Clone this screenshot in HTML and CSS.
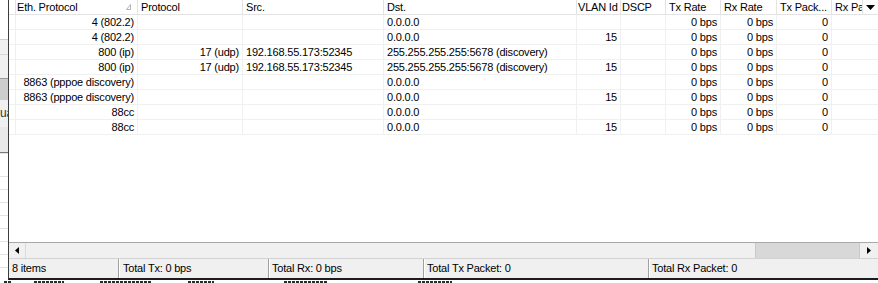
FILE: index.html
```html
<!DOCTYPE html>
<html lang="en">
<head>
    <meta charset="UTF-8">
    <title>Sniffer</title>
    <link rel="stylesheet" href="styles.css">
</head>
<body>
    <div class="screen">
        <div class="backdrop">
            <div class="bd-top"></div>
            <div class="bd-panel"></div>
            <div class="bd-dark"></div>
            <div class="bd-label">ua</div>
            <div class="bd-panel2"></div>
            <div class="bd-list"></div>
        </div>

        <div class="window">
            <div class="grid">
                <div class="row head">
                    <div class="cell"></div>
                    <div class="cell sorted">
                        <span>Eth. Protocol</span>
                        <svg class="sort-mark" width="5" height="6" viewBox="0 0 5 6"><polyline points="0.5,5.5 4.5,0.5 4.5,5.5 0.5,5.5" fill="none" stroke="#b4b4b4" stroke-width="1"/></svg>
                    </div>
                    <div class="cell">Protocol</div>
                    <div class="cell">Src.</div>
                    <div class="cell">Dst.</div>
                    <div class="cell tight">VLAN Id</div>
                    <div class="cell tight">DSCP</div>
                    <div class="cell">Tx Rate</div>
                    <div class="cell">Rx Rate</div>
                    <div class="cell">Tx Pack...</div>
                    <div class="cell">Rx Pa</div>
                    <div class="cell menu">
                        <svg width="9" height="5" viewBox="0 0 9 5"><polygon points="0,0 9,0 4.5,5" fill="#000"/></svg>
                    </div>
                </div>

                <div class="row">
                    <div class="cell"></div>
                    <div class="cell r">4 (802.2)</div>
                    <div class="cell r"></div>
                    <div class="cell"></div>
                    <div class="cell">0.0.0.0</div>
                    <div class="cell r"></div>
                    <div class="cell"></div>
                    <div class="cell r">0 bps</div>
                    <div class="cell r">0 bps</div>
                    <div class="cell r">0</div>
                    <div class="cell last"></div>
                </div>
                <div class="row">
                    <div class="cell"></div>
                    <div class="cell r">4 (802.2)</div>
                    <div class="cell r"></div>
                    <div class="cell"></div>
                    <div class="cell">0.0.0.0</div>
                    <div class="cell r">15</div>
                    <div class="cell"></div>
                    <div class="cell r">0 bps</div>
                    <div class="cell r">0 bps</div>
                    <div class="cell r">0</div>
                    <div class="cell last"></div>
                </div>
                <div class="row">
                    <div class="cell"></div>
                    <div class="cell r">800 (ip)</div>
                    <div class="cell r">17 (udp)</div>
                    <div class="cell">192.168.55.173:52345</div>
                    <div class="cell">255.255.255.255:5678 (discovery)</div>
                    <div class="cell r"></div>
                    <div class="cell"></div>
                    <div class="cell r">0 bps</div>
                    <div class="cell r">0 bps</div>
                    <div class="cell r">0</div>
                    <div class="cell last"></div>
                </div>
                <div class="row">
                    <div class="cell"></div>
                    <div class="cell r">800 (ip)</div>
                    <div class="cell r">17 (udp)</div>
                    <div class="cell">192.168.55.173:52345</div>
                    <div class="cell">255.255.255.255:5678 (discovery)</div>
                    <div class="cell r">15</div>
                    <div class="cell"></div>
                    <div class="cell r">0 bps</div>
                    <div class="cell r">0 bps</div>
                    <div class="cell r">0</div>
                    <div class="cell last"></div>
                </div>
                <div class="row">
                    <div class="cell"></div>
                    <div class="cell r">8863 (pppoe discovery)</div>
                    <div class="cell r"></div>
                    <div class="cell"></div>
                    <div class="cell">0.0.0.0</div>
                    <div class="cell r"></div>
                    <div class="cell"></div>
                    <div class="cell r">0 bps</div>
                    <div class="cell r">0 bps</div>
                    <div class="cell r">0</div>
                    <div class="cell last"></div>
                </div>
                <div class="row">
                    <div class="cell"></div>
                    <div class="cell r">8863 (pppoe discovery)</div>
                    <div class="cell r"></div>
                    <div class="cell"></div>
                    <div class="cell">0.0.0.0</div>
                    <div class="cell r">15</div>
                    <div class="cell"></div>
                    <div class="cell r">0 bps</div>
                    <div class="cell r">0 bps</div>
                    <div class="cell r">0</div>
                    <div class="cell last"></div>
                </div>
                <div class="row">
                    <div class="cell"></div>
                    <div class="cell r">88cc</div>
                    <div class="cell r"></div>
                    <div class="cell"></div>
                    <div class="cell">0.0.0.0</div>
                    <div class="cell r"></div>
                    <div class="cell"></div>
                    <div class="cell r">0 bps</div>
                    <div class="cell r">0 bps</div>
                    <div class="cell r">0</div>
                    <div class="cell last"></div>
                </div>
                <div class="row">
                    <div class="cell"></div>
                    <div class="cell r">88cc</div>
                    <div class="cell r"></div>
                    <div class="cell"></div>
                    <div class="cell">0.0.0.0</div>
                    <div class="cell r">15</div>
                    <div class="cell"></div>
                    <div class="cell r">0 bps</div>
                    <div class="cell r">0 bps</div>
                    <div class="cell r">0</div>
                    <div class="cell last"></div>
                </div>
            </div>

            <div class="hscroll">
                <div class="sb-btn sb-left">
                    <svg width="4" height="7" viewBox="0 0 4 7"><polygon points="4,0 4,7 0,3.5" fill="#000"/></svg>
                </div>
                <div class="sb-track"><div class="sb-thumb"></div></div>
                <div class="sb-btn sb-right">
                    <svg width="4" height="7" viewBox="0 0 4 7"><polygon points="0,0 0,7 4,3.5" fill="#000"/></svg>
                </div>
            </div>

            <div class="status">
                <div class="st st-items">8 items</div>
                <div class="st st-tx">Total Tx: 0 bps</div>
                <div class="st st-rx">Total Rx: 0 bps</div>
                <div class="st st-txp">Total Tx Packet: 0</div>
                <div class="st st-rxp">Total Rx Packet: 0</div>
            </div>
        </div>
    </div>
    <div class="under">
        <span class="frag f1"></span>
        <span class="frag f2"></span>
        <span class="frag f3"></span>
        <span class="frag f4"></span>
        <span class="frag f5"></span>
        <span class="frag f6"></span>
    </div>
</body>
</html>
```

FILE: styles.css
```css
* {
    margin: 0;
    padding: 0;
    box-sizing: border-box;
}

body {
    font-family: "Liberation Sans", Arial, sans-serif;
    font-size: 11px;
    letter-spacing: -0.2px;
    color: #000;
    background: #fff;
    width: 878px;
    height: 283px;
    overflow: hidden;
}

.screen {
    display: flex;
    height: 280px;
}

/* window behind, only a thin strip shows */
.backdrop {
    width: 8px;
    display: flex;
    flex-direction: column;
    overflow: hidden;
}

.bd-top {
    height: 40px;
    background: #fff;
    border-bottom: 1px solid #cfcfcf;
}

.bd-panel {
    height: 38px;
    background: #f0f0f0;
    border-top: 14px solid #f0f0f0;
    background-image: linear-gradient(#d8d8d8, #d8d8d8);
    background-size: 100% 1px;
    background-repeat: no-repeat;
}

.bd-dark {
    height: 22px;
    background: #cdcdcd;
    border-top: 1px solid #9a9a9a;
}

.bd-label {
    height: 27px;
    background: #f0f0f0;
    line-height: 27px;
    text-align: right;
    font-size: 12px;
    color: #333;
    white-space: nowrap;
}

.bd-panel2 {
    height: 26px;
    background: #e9e9e9;
    border-bottom: 1px solid #7a7a7a;
}

.bd-list {
    flex: 1;
    background: repeating-linear-gradient(#fff 0, #fff 12px, #e3e3e3 12px, #e3e3e3 13px);
    background-position: 0 11px;
}

.window {
    flex: 1;
    display: flex;
    flex-direction: column;
    border-left: 1px solid #3c3c3c;
    border-bottom: 2px solid #1c1c1c;
    overflow: hidden;
}

.grid {
    height: 242px;
    background: #fff;
}

.row {
    display: grid;
    grid-template-columns: 5px 124px 105px 141px 193px 44px 45px 55px 56px 55px 31px 15px;
    height: 15px;
}

.cell {
    height: 15px;
    line-height: 15px;
    padding: 0 3px;
    white-space: nowrap;
    overflow: hidden;
    border-right: 1px solid #f0f0f0;
    border-bottom: 1px solid #f0f0f0;
}

.cell.r {
    text-align: right;
}

.cell.last {
    grid-column: span 2;
    border-right: none;
}

.head .cell {
    border-color: #e3e3e3;
    line-height: 14px;
}

.head .cell.tight {
    padding-left: 1px;
}

.sorted {
    display: flex;
    justify-content: space-between;
    align-items: center;
}

.sort-mark {
    margin-right: 3px;
}

.menu {
    display: flex;
    align-items: center;
    justify-content: center;
    border-right: none;
    padding: 0;
}

.hscroll {
    display: flex;
    height: 16px;
    border-top: 1px solid #a8a8a8;
    background: #f0f0f0;
}

.sb-btn {
    display: flex;
    align-items: center;
    justify-content: center;
    height: 15px;
}

.sb-left {
    width: 17px;
    border-right: 1px solid #dadada;
}

.sb-right {
    width: 18px;
}

.sb-track {
    flex: 1;
    display: flex;
    justify-content: flex-end;
}

.sb-thumb {
    width: 105px;
    background: #d8d8d8;
    border-left: 1px solid #c8c8c8;
    border-right: 1px solid #c8c8c8;
}

.status {
    display: flex;
    height: 20px;
    background: #f0f0f0;
    border-top: 1px solid #d2d2d2;
}

.st {
    line-height: 19px;
    padding-left: 3px;
    white-space: nowrap;
    border-left: 1px solid #a0a0a0;
    box-shadow: inset 1px 0 0 #fff;
}

.st-items {
    width: 109px;
    border-left: none;
    box-shadow: none;
}

.st-tx {
    width: 150px;
    padding-left: 4px;
}

.st-rx {
    width: 155px;
}

.st-txp {
    width: 225px;
}

.st-rxp {
    flex: 1;
}

/* tops of the text in the window underneath */
.under {
    display: flex;
    height: 3px;
    padding-top: 1px;
}

.frag {
    height: 2px;
    background: repeating-linear-gradient(90deg, #2a2a2a 0, #2a2a2a 3px, #fff 3px, #fff 4px);
}

.f1 { width: 8px; margin-left: 4px; }
.f2 { width: 30px; margin-left: 22px; }
.f3 { width: 52px; margin-left: 36px; }
.f4 { width: 26px; margin-left: 36px; }
.f5 { width: 44px; margin-left: 70px; }
.f6 { width: 34px; margin-left: 90px; }
```
